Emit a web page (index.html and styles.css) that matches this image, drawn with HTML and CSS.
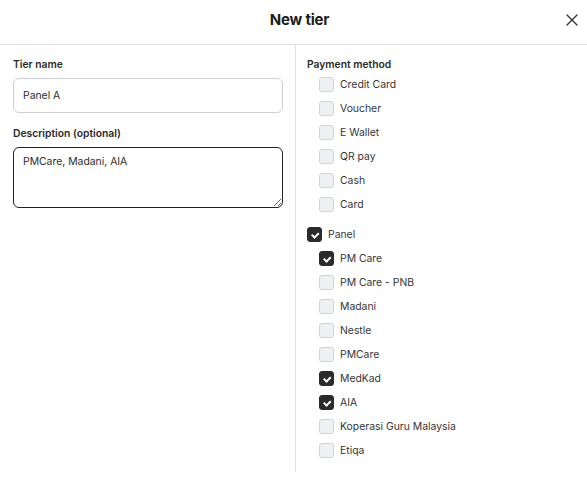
FILE: index.html
```html
<!DOCTYPE html>
<html lang="en">
<head>
    <meta charset="UTF-8">
    <meta name="viewport" content="width=device-width, initial-scale=1.0">
    <title>New tier</title>
    <link rel="stylesheet" href="styles.css">
</head>
<body>
    <div class="modal">
        <header class="modal-header">
            <h1>New tier</h1>
            <button class="close-button" aria-label="Close">
                <svg width="12" height="12" viewBox="0 0 12 12">
                    <path d="M1 1L11 11M11 1L1 11" stroke="#333" stroke-width="1.4" stroke-linecap="round"/>
                </svg>
            </button>
        </header>

        <div class="modal-body">
            <div class="form-column">
                <label class="field-label" for="tier-name">Tier name</label>
                <input id="tier-name" class="text-input" type="text" value="Panel A">

                <label class="field-label" for="tier-desc">Description (optional)</label>
                <textarea id="tier-desc" class="text-area">PMCare, Madani, AIA</textarea>
            </div>

            <div class="payment-column">
                <div class="field-label">Payment method</div>
                <ul class="method-list">
                    <li class="method"><span class="box"></span>Credit Card</li>
                    <li class="method"><span class="box"></span>Voucher</li>
                    <li class="method"><span class="box"></span>E Wallet</li>
                    <li class="method"><span class="box"></span>QR pay</li>
                    <li class="method"><span class="box"></span>Cash</li>
                    <li class="method"><span class="box"></span>Card</li>
                </ul>

                <div class="method group"><span class="box checked"></span>Panel</div>
                <ul class="method-list">
                    <li class="method"><span class="box checked"></span>PM Care</li>
                    <li class="method"><span class="box"></span>PM Care - PNB</li>
                    <li class="method"><span class="box"></span>Madani</li>
                    <li class="method"><span class="box"></span>Nestle</li>
                    <li class="method"><span class="box"></span>PMCare</li>
                    <li class="method"><span class="box checked"></span>MedKad</li>
                    <li class="method"><span class="box checked"></span>AIA</li>
                    <li class="method"><span class="box"></span>Koperasi Guru Malaysia</li>
                    <li class="method"><span class="box"></span>Etiqa</li>
                </ul>
            </div>
        </div>
    </div>
</body>
</html>
```

FILE: styles.css
```css
* {
    margin: 0;
    padding: 0;
    box-sizing: border-box;
    font-family: Inter, "Noto Sans", sans-serif;
}
body {
    background-color: #fff;
    color: #2e2e2e;
}
.modal-header {
    height: 45px;
    border-bottom: 1px solid #e2e2e2;
    display: flex;
    align-items: center;
    justify-content: center;
    position: relative;
}
.modal-header h1 {
    font-size: 15px;
    font-weight: 700;
    color: #1e1e1e;
    letter-spacing: -0.2px;
    margin: -6px 0 0 12px;
}
.close-button {
    position: absolute;
    right: 9px;
    top: 14px;
    background: none;
    border: none;
    cursor: pointer;
    display: flex;
}
.modal-body {
    display: grid;
    grid-template-columns: 295px 1fr;
}
.form-column {
    padding: 12px 12px 0 13px;
    display: flex;
    flex-direction: column;
}
.field-label {
    font-size: 10.3px;
    font-weight: 600;
    line-height: 15px;
    color: #2b2b2b;
}
.text-input, .text-area {
    width: 270px;
    border-radius: 6px;
    font-size: 10.4px;
    color: #2e2e2e;
    padding: 0 9px;
    outline: none;
}
.text-input {
    height: 35px;
    border: 1px solid #cfcfcf;
    margin: 6px 0 13px;
}
.text-area {
    height: 61px;
    border: 1px solid #222;
    margin-top: 6px;
    padding-top: 7px;
    line-height: 14px;
    resize: vertical;
}
.payment-column {
    border-left: 1px solid #e2e2e2;
    padding: 12px 12px 10px 11px;
}
.method-list {
    list-style: none;
    padding-left: 12px;
}
.method {
    height: 24px;
    display: flex;
    align-items: center;
    gap: 6px;
    font-size: 10.4px;
    color: #363636;
}
.method.group {
    margin-top: 6px;
}
.box {
    width: 15px;
    height: 15px;
    border: 1px solid #d2d3d6;
    border-radius: 3px;
    background-color: #eff0f2;
    flex-shrink: 0;
    position: relative;
}
.box.checked {
    background-color: #2b2b2b;
    border-color: #2b2b2b;
}
.box.checked::after {
    content: "";
    position: absolute;
    left: 5px;
    top: 3.5px;
    width: 2.5px;
    height: 4.5px;
    border: solid #fff;
    border-width: 0 2px 2px 0;
    transform: rotate(45deg);
}
```
